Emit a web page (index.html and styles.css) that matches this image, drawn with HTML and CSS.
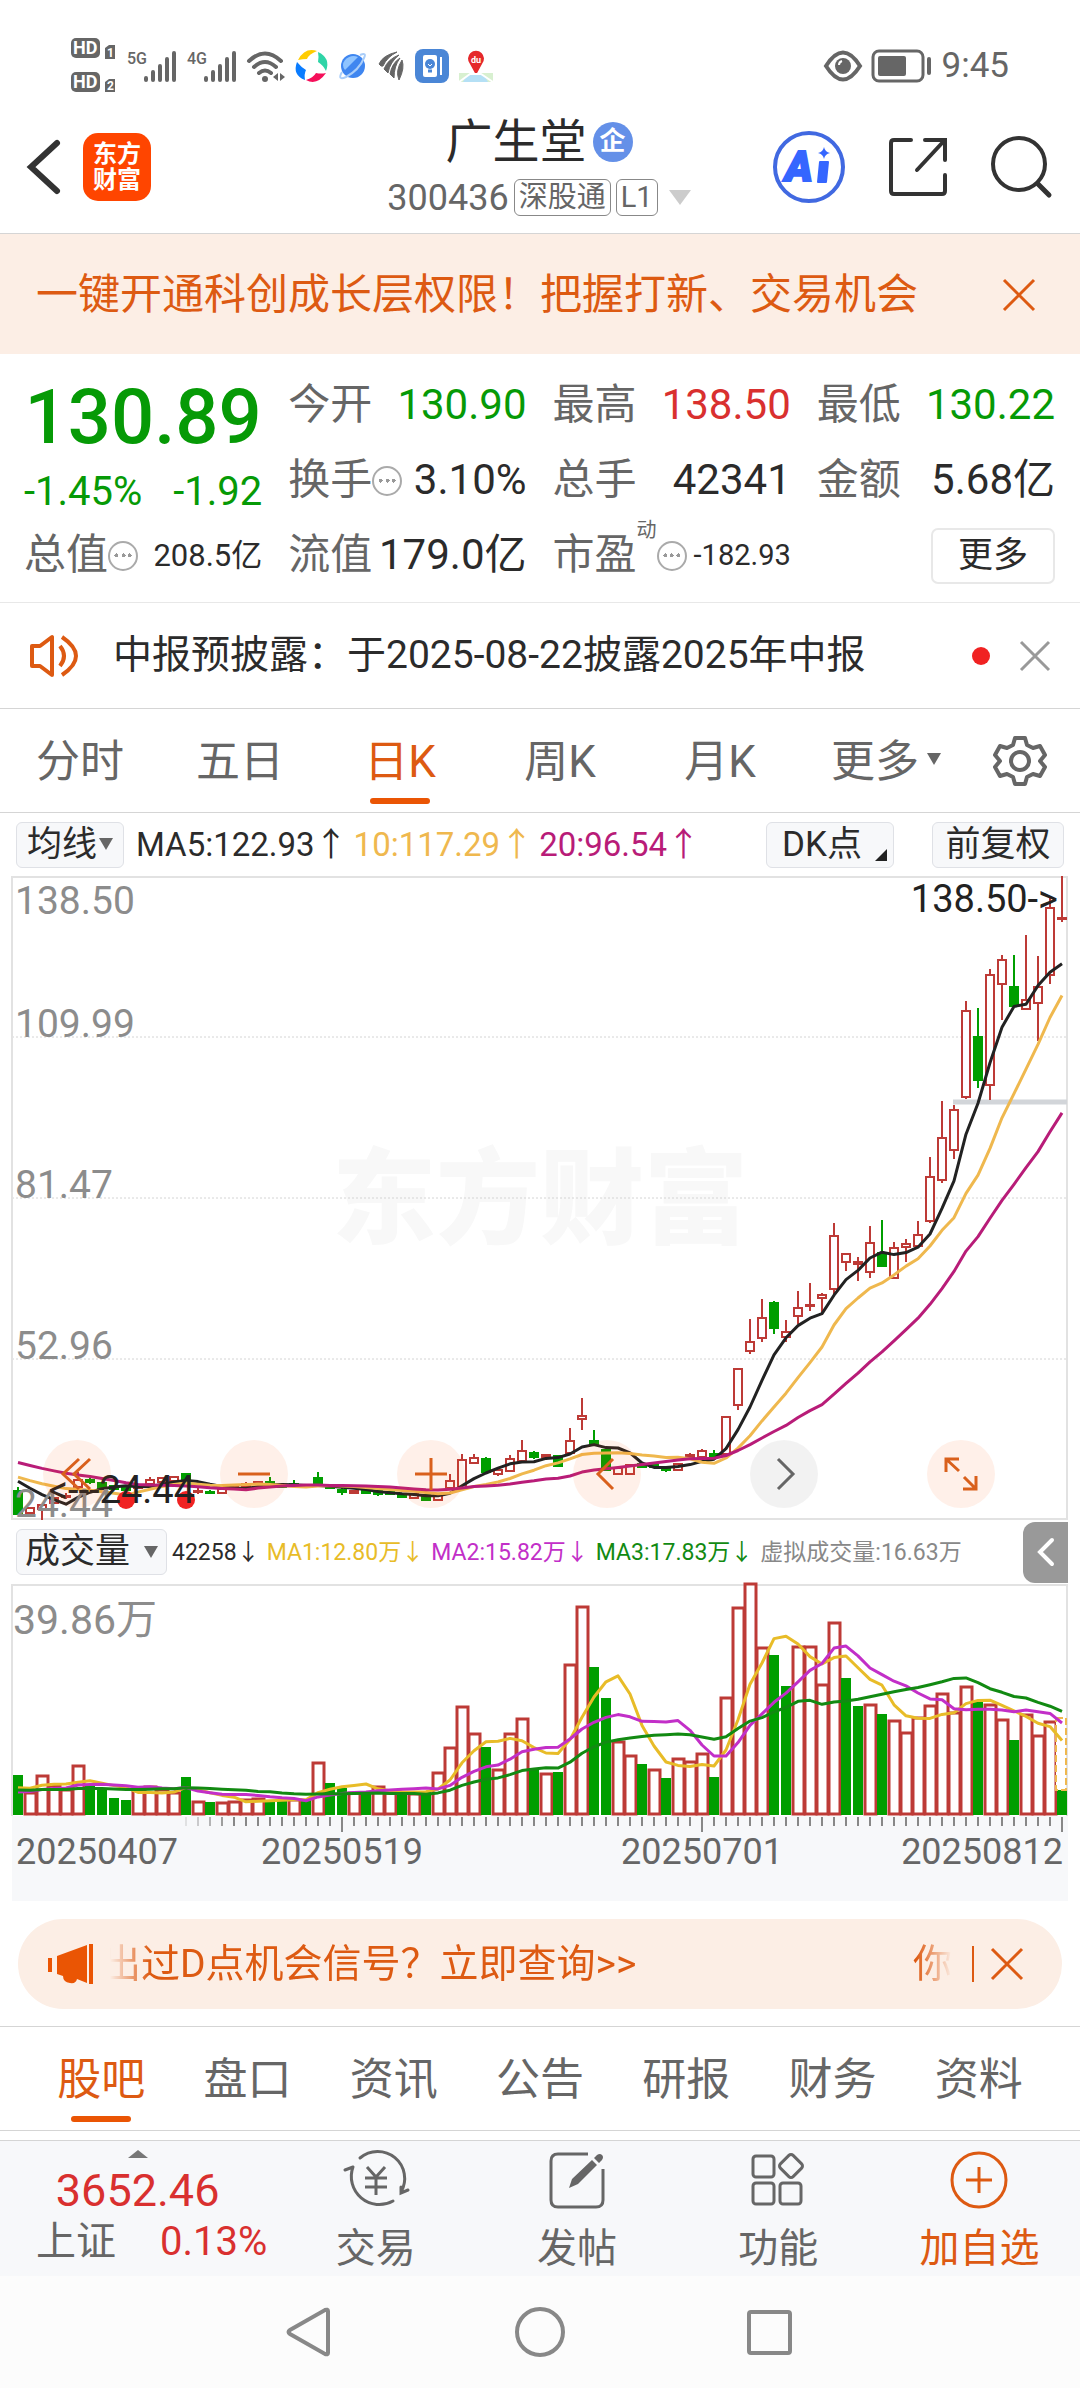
FILE: index.html
```html
<!DOCTYPE html>
<html lang="zh-CN">
<head>
    <meta charset="UTF-8">
    <meta name="viewport" content="width=device-width, initial-scale=1.0">
    <title>广生堂 300436</title>
    <link rel="stylesheet" href="styles.css">
</head>
<body>
    <!-- status bar -->
    <div class="status-bar">
        <div class="status-left">
            <svg width="46" height="56" viewBox="0 0 46 56">
                <rect x="0" y="0" width="29" height="20" rx="5" fill="#666"/>
                <rect x="0" y="34" width="29" height="20" rx="5" fill="#666"/>
                <path d="M34 10l4-3h6v14H34zM34 44l4-3h6v13H34z" fill="#666"/>
                <text class="hd" x="2" y="16">HD</text>
                <text class="hd" x="2" y="50">HD</text>
                <text class="sim" x="36" y="19">1</text>
                <text class="sim" x="36" y="52">2</text>
            </svg>
            <svg width="50" height="34" viewBox="0 0 50 34">
                <text class="net" x="0" y="15">5G</text>
                <path d="M19 31v-2M26 31v-8M33 31V17M40 31V10M47 31V4" stroke="#666" stroke-width="4" stroke-linecap="round"/>
            </svg>
            <svg width="50" height="34" viewBox="0 0 50 34">
                <text class="net" x="0" y="15">4G</text>
                <path d="M19 31v-2M26 31v-8M33 31V17M40 31V10M47 31V4" stroke="#666" stroke-width="4" stroke-linecap="round"/>
            </svg>
            <svg width="38" height="34" viewBox="0 0 38 34">
                <path d="M2 12Q18-3 34 12M7 18Q18 8 29 18M12 24Q18 19 24 24" fill="none" stroke="#666" stroke-width="4" stroke-linecap="round"/>
                <circle cx="18" cy="30" r="3" fill="#666"/>
                <path d="M31 24v8l-5-4zM33 32v-8l5 4z" fill="#666"/>
            </svg>
            <svg width="34" height="34" viewBox="0 0 34 34">
                <path d="M3 11Q10-2 22 2Q14 5 12 10Q8 10 3 11z" fill="#fc0"/>
                <path d="M23 3Q36 9 31 22Q28 16 23 13Q24 8 23 3z" fill="#2fd4a7"/>
                <path d="M31 24Q22 37 11 31Q18 29 21 24Q26 25 31 24z" fill="#f5105a"/>
                <path d="M2 13Q-3 26 10 31Q9 25 11 21Q6 18 2 13z" fill="#0a7cff"/>
            </svg>
            <svg width="28" height="28" viewBox="0 0 28 28">
                <circle cx="14" cy="14" r="12" fill="#3f86f0"/>
                <path d="M6 8q6-6 13-3l-13 13q-4-5 0-10z" fill="#8fc4ff"/>
                <path d="M3 20q-5 9 4 5Q20 18 25 6q3-6-4-3" fill="none" stroke="#a9cdf9" stroke-width="2"/>
            </svg>
            <svg width="28" height="30" viewBox="-2 0 28 30">
                <path d="M18 1Q4 4 0 13Q2 16 4 15Q8 6 18 1zM20 4Q9 8 5 18l4 4Q11 11 20 4zM21 7Q13 12 11 23l4 4Q15 15 21 7zM23 9Q26 17 20 29Q16 20 23 9z" fill="#666" stroke="#666"/>
            </svg>
            <svg width="34" height="34" viewBox="0 0 34 34">
                <rect width="34" height="34" rx="8" fill="#4a86d6"/>
                <rect x="8" y="6" width="14" height="22" rx="2" fill="#fff"/>
                <path d="M26 8v18" stroke="#fff" stroke-width="2"/>
                <circle cx="15" cy="15" r="5" fill="#4a86d6"/>
                <path d="M13 22h4" stroke="#4a86d6" stroke-width="3"/>
                <path d="M13 15l2 2 2-2" fill="none" stroke="#fff"/>
            </svg>
            <svg width="34" height="34" viewBox="0 0 34 34">
                <path d="M0 24h34v9H0z" fill="#d8f0d0"/>
                <path d="M8 26h17l4 7H4z" fill="#b5e0f5"/>
                <path d="M17 26L11 15A8 8 0 1 1 23 15z" fill="#e5282b"/>
                <path d="M0 33L11 25h11l12 8" fill="none" stroke="#fff" stroke-width="2"/>
                <text class="pin" x="17" y="14">du</text>
            </svg>
        </div>
        <div class="status-right">
            <svg width="38" height="30" viewBox="0 0 38 30">
                <path d="M2 15Q19-12 36 15Q19 42 2 15z" fill="none" stroke="#666" stroke-width="4"/>
                <circle cx="19" cy="15" r="8" fill="#666"/>
                <path d="M15 14q0-3 3-4" fill="none" stroke="#fff" stroke-width="2"/>
            </svg>
            <svg width="60" height="32" viewBox="0 0 60 32">
                <rect x="1" y="1" width="50" height="30" rx="6" fill="none" stroke="#666" stroke-width="3"/>
                <rect x="6" y="6" width="28" height="20" rx="2" fill="#666"/>
                <path d="M57 9v14" stroke="#666" stroke-width="4" stroke-linecap="round"/>
            </svg>
            <span class="clock">9:45</span>
        </div>
    </div>

    <header class="header">
        <div class="header-side">
            <button class="icon-btn" aria-label="返回">
                <svg width="36" height="56" viewBox="0 0 36 56"><path d="M31 4L5 28l26 24" fill="none" stroke="#333" stroke-width="6" stroke-linecap="round"/></svg>
            </button>
            <a class="logo" href="#">东方<br>财富</a>
        </div>
        <div class="stock">
            <h1>广生堂<span class="corp">企</span></h1>
            <div class="stock-code">
                <span>300436</span>
                <span class="tag">深股通</span>
                <span class="tag">L1</span>
                <svg width="22" height="15" viewBox="0 0 22 15"><path d="M0 0h22L11 15z" fill="#ccc"/></svg>
            </div>
        </div>
        <div class="header-side header-right">
            <button class="icon-btn" aria-label="AI">
                <svg width="74" height="74" viewBox="0 0 74 74">
                    <circle cx="37" cy="37" r="34" fill="none" stroke="#4169e1" stroke-width="4"/>
                    <text class="ai" x="13" y="51">A</text>
                    <path d="M48 32h8l-2 20h-8z" fill="#3566ff" stroke="#3566ff" stroke-width="2" stroke-linejoin="round"/>
                    <path d="M52 17q1 5 6 6q-5 1-6 6q-1-5-6-6q5-1 6-6z" fill="#3566ff"/>
                </svg>
            </button>
            <button class="icon-btn" aria-label="分享">
                <svg width="60" height="60" viewBox="0 0 60 60"><path d="M23 3H6q-3 0-3 3v48q0 3 3 3h48q3 0 3-3V38M37 3h20v20M55 5L29 33" fill="none" stroke="#333" stroke-width="4" stroke-linecap="round"/></svg>
            </button>
            <button class="icon-btn" aria-label="搜索">
                <svg width="62" height="62" viewBox="0 0 62 62"><circle cx="29" cy="28" r="26" fill="none" stroke="#333" stroke-width="4"/><path d="M48 48l11 11" stroke="#333" stroke-width="5" stroke-linecap="round"/></svg>
            </button>
        </div>
    </header>

    <div class="banner">
        <a href="#">一键开通科创成长层权限！把握打新、交易机会</a>
        <button class="icon-btn" aria-label="关闭">
            <svg width="34" height="34" viewBox="0 0 34 34"><path d="M2 2l30 30M32 2L2 32" stroke="#dd5a12" stroke-width="3"/></svg>
        </button>
    </div>

    <!-- quote -->
    <section class="quote">
        <div class="price down">
            <strong>130.89</strong>
            <div class="change"><span>-1.45%</span><span>-1.92</span></div>
        </div>
        <div class="item"><span>今开</span><b class="down">130.90</b></div>
        <div class="item"><span>最高</span><b class="up">138.50</b></div>
        <div class="item"><span>最低</span><b class="down">130.22</b></div>
        <div class="item"><span>换手</span><i class="info"></i><b>3.10%</b></div>
        <div class="item"><span>总手</span><b>42341</b></div>
        <div class="item"><span>金额</span><b>5.68亿</b></div>
        <div class="item"><span>总值</span><i class="info"></i><b class="small">208.5亿</b></div>
        <div class="item"><span>流值</span><b>179.0亿</b></div>
        <div class="item"><span>市盈</span><sup>动</sup><i class="info"></i><b class="smaller">-182.93</b></div>
        <button class="more">更多</button>
    </section>

    <div class="notice">
        <svg width="50" height="44" viewBox="0 0 50 44"><path d="M2 12h8L22 3v38L10 32H2zM30 12q8 10 0 20M32 3q28 19 0 38" fill="none" stroke="#dd5a12" stroke-width="4" stroke-linejoin="round"/></svg>
        <a href="#">中报预披露：于2025-08-22披露2025年中报</a>
        <span class="dot"></span>
        <button class="icon-btn" aria-label="关闭">
            <svg width="30" height="30" viewBox="0 0 30 30"><path d="M1 1l28 28M29 1L1 29" stroke="#999" stroke-width="3"/></svg>
        </button>
    </div>

    <nav class="period-tabs">
        <button>分时</button>
        <button>五日</button>
        <button class="active">日K</button>
        <button>周K</button>
        <button>月K</button>
        <button class="drop">更多<span class="caret"></span></button>
        <button class="gear" aria-label="设置">
            <svg width="52" height="52" viewBox="0 0 52 52">
                <path d="M21 3h10l2 7 6 3 7-2 5 9-5 6 5 6-5 9-7-2-6 3-2 7H21l-2-7-6-3-7 2-5-9 5-6-5-6 5-9 7 2 6-3z" fill="none" stroke="#666" stroke-width="4" stroke-linejoin="round"/>
                <circle cx="26" cy="26" r="9" fill="none" stroke="#666" stroke-width="4"/>
            </svg>
        </button>
    </nav>

    <div class="toolbar">
        <button class="chip line-type">均线<span class="caret"></span></button>
        <div class="ma-values">
            <span>MA5:122.93↑</span>
            <span class="ma10">10:117.29↑</span>
            <span class="ma20">20:96.54↑</span>
        </div>
        <button class="chip dk">DK点<span class="corner"></span></button>
        <button class="chip restore">前复权</button>
    </div>

    <!-- daily K chart -->
    <div class="chart">
        <svg id="kChart" viewBox="0 0 1056 644"></svg>
        <div class="chart-actions">
            <button aria-label="最左"><svg width="32" height="32" viewBox="0 0 32 32"><path d="M18 1L2 16l16 15M29 1L13 16l16 15"/></svg></button>
            <button aria-label="缩小"><svg width="32" height="32" viewBox="0 0 32 32"><path d="M0 16h32"/></svg></button>
            <button aria-label="放大"><svg width="32" height="32" viewBox="0 0 32 32"><path d="M0 16h32M16 0v32"/></svg></button>
            <button aria-label="左移"><svg width="32" height="32" viewBox="0 0 32 32"><path d="M22 1L7 16l15 15"/></svg></button>
            <button class="off" aria-label="右移"><svg width="32" height="32" viewBox="0 0 32 32"><path d="M10 1l15 15-15 15"/></svg></button>
            <button aria-label="全屏"><svg width="34" height="34" viewBox="0 0 34 34"><path d="M15 2H2v13M2 2l13 12M32 19v13H19M32 32L20 20"/></svg></button>
        </div>
    </div>

    <div class="vol-bar">
        <button class="chip">成交量<span class="caret"></span></button>
        <div class="vol-values">
            <span>42258↓</span>
            <span class="v1">MA1:12.80万↓</span>
            <span class="v2">MA2:15.82万↓</span>
            <span class="v3">MA3:17.83万↓</span>
            <span class="v4">虚拟成交量:16.63万</span>
        </div>
        <button class="fold" aria-label="展开">
            <svg width="18" height="30" viewBox="0 0 18 30"><path d="M15 3L3 15l12 12" fill="none" stroke="#fff" stroke-width="4" stroke-linecap="round"/></svg>
        </button>
    </div>

    <div class="chart">
        <svg id="volChart" viewBox="0 0 1056 317"></svg>
    </div>

    <div class="promo">
        <svg width="46" height="40" viewBox="0 0 46 40"><path d="M1 14h4v14H1zM10 12L40 1v38l-10-4q-1 5-7 4q-7-1-7-7l-6-2zM42 0h4v40h-4z" fill="#ea5504"/></svg>
        <a href="#" class="promo-text"><span>出过D点机会信号？立即查询&gt;&gt;</span><span>你</span></a>
        <span class="line"></span>
        <button class="icon-btn" aria-label="关闭">
            <svg width="34" height="34" viewBox="0 0 34 34"><path d="M2 2l30 30M32 2L2 32" stroke="#dd5a12" stroke-width="3"/></svg>
        </button>
    </div>

    <nav class="info-tabs">
        <button class="active">股吧</button>
        <button>盘口</button>
        <button>资讯</button>
        <button>公告</button>
        <button>研报</button>
        <button>财务</button>
        <button>资料</button>
    </nav>

    <footer class="bottom-bar">
        <a href="#" class="index">
            <svg width="20" height="8" viewBox="0 0 20 8"><path d="M0 8L10 0l10 8z" fill="#777"/></svg>
            <span class="index-value">3652.46</span>
            <span class="index-row"><span>上证</span><span class="up">0.13%</span></span>
        </a>
        <button>
            <svg width="66" height="60" viewBox="0 0 66 60" fill="none" stroke="#666" stroke-width="3">
                <path d="M17 8A27 27 0 0 1 58 42M2 20l8-3M10 17A28 28 0 0 0 50 51M65 40l-7 3v-6" stroke-linecap="round"/>
                <path d="M24 17l9 10 9-10M22 28h22M22 37h22M33 27v18"/>
            </svg>
            交易
        </button>
        <button>
            <svg width="66" height="60" viewBox="0 0 66 60" fill="none" stroke="#666" stroke-width="3">
                <path d="M44 4H14q-7 0-7 7v39q0 7 7 7h38q7 0 7-7V19"/>
                <path d="M25 38l3-9L48 10l5 5-19 19zM50 8l3-3q3-2 5 0t0 5l-3 3z" fill="#666" stroke="none"/>
            </svg>
            发帖
        </button>
        <button>
            <svg width="66" height="60" viewBox="0 0 66 60" fill="none" stroke="#666" stroke-width="3">
                <rect x="8" y="6" width="21" height="21" rx="3"/>
                <rect x="8" y="33" width="21" height="21" rx="3"/>
                <rect x="35" y="33" width="21" height="21" rx="3"/>
                <rect x="37" y="7" width="18" height="18" rx="3" transform="rotate(45 46 16)"/>
            </svg>
            功能
        </button>
        <button class="add">
            <svg width="66" height="60" viewBox="0 0 66 60" fill="none" stroke="#dd5a12" stroke-width="3"><circle cx="33" cy="30" r="27"/><path d="M33 17v26M20 30h26"/></svg>
            加自选
        </button>
    </footer>

    <div class="system-nav">
        <button class="icon-btn" aria-label="后退"><svg width="52" height="52" viewBox="0 0 52 52"><path d="M44 5v42q0 2-3 1L6 28q-3-2 0-4L41 4q3-1 3 1z" fill="none" stroke="#888" stroke-width="4"/></svg></button>
        <button class="icon-btn" aria-label="主页"><svg width="52" height="52" viewBox="0 0 52 52"><circle cx="26" cy="26" r="23" fill="none" stroke="#888" stroke-width="4"/></svg></button>
        <button class="icon-btn" aria-label="任务"><svg width="52" height="52" viewBox="0 0 52 52"><rect x="5" y="6" width="41" height="41" rx="2" fill="none" stroke="#888" stroke-width="4"/></svg></button>
    </div>

    <script src="script.js"></script>
</body>
</html>
```

FILE: styles.css
```css
* {
    box-sizing: border-box;
}

body {
    margin: 0;
    background: #fff;
    color: #2b2b2b;
    font-family: Roboto, "Noto Sans CJK SC", sans-serif;
    line-height: 1.2;
}

button {
    padding: 0;
    border: none;
    background: none;
    color: inherit;
    font-family: inherit;
    line-height: inherit;
    cursor: pointer;
}

a {
    color: inherit;
    text-decoration: none;
}

svg {
    display: block;
    flex-shrink: 0;
    overflow: visible;
}

.up {
    color: #d9302f;
}

.down {
    color: #069a06;
}

.caret {
    display: inline-block;
    border: 7px solid transparent;
    border-top: 12px solid #666;
    border-bottom: none;
}

/* status bar */
.status-bar {
    display: flex;
    justify-content: space-between;
    height: 100px;
    padding: 32px 71px 0;
}

.status-left,
.status-right {
    display: flex;
    align-items: center;
    gap: 10px;
}

.hd {
    font-size: 18px;
    font-weight: 700;
    fill: #fff;
}

.sim {
    font-size: 12px;
    font-weight: 700;
    fill: #fff;
}

.net {
    font-size: 16px;
    font-weight: 500;
    fill: #666;
}

.pin {
    font-size: 9px;
    font-weight: 700;
    fill: #fff;
    text-anchor: middle;
}

.clock {
    color: #666;
    font-size: 35px;
}

/* header */
.header {
    display: flex;
    align-items: center;
    justify-content: space-between;
    height: 134px;
    padding: 0 28px 0 26px;
    border-bottom: 1px solid #d5d5d5;
}

.header-side {
    display: flex;
    flex: 1;
    align-items: center;
    gap: 21px;
}

.header-right {
    justify-content: flex-end;
    gap: 42px;
}

.logo {
    padding: 8px 0;
    width: 68px;
    border-radius: 15px;
    background: #ff4500;
    color: #fff;
    font-size: 24px;
    font-weight: 700;
    line-height: 26px;
    text-align: center;
}

.stock {
    padding-top: 4px;
}

.stock h1 {
    display: flex;
    align-items: center;
    justify-content: center;
    gap: 6px;
    margin: 0;
    font-size: 47px;
    font-weight: 400;
    line-height: 58px;
}

.corp {
    width: 40px;
    height: 40px;
    border-radius: 50%;
    background: #6490e8;
    color: #fff;
    font-size: 26px;
    font-weight: 700;
    line-height: 38px;
    text-align: center;
}

.stock-code {
    display: flex;
    align-items: center;
    gap: 5px;
    color: #666;
    font-size: 36px;
    line-height: 54px;
}

.stock-code svg {
    margin-left: 6px;
}

.tag {
    padding: 0 4px;
    border: 1px solid #888;
    border-radius: 6px;
    font-size: 29px;
    line-height: 35px;
}

.ai {
    font-size: 42px;
    font-weight: 900;
    font-style: italic;
    fill: #3566ff;
    stroke: #3566ff;
    stroke-width: 2;
}

.banner {
    display: flex;
    align-items: center;
    justify-content: space-between;
    height: 120px;
    padding: 2px 44px 0 36px;
    background: #fceee5;
    color: #dd5a12;
    font-size: 42px;
}

/* quote */
.quote {
    display: grid;
    grid-template-columns: repeat(4, minmax(0, 1fr));
    grid-auto-rows: 75px;
    column-gap: 26px;
    padding: 14px 25px 9px 24px;
    border-bottom: 1px solid #e8e8e8;
}

.price {
    grid-row: span 2;
}

.price strong {
    display: block;
    font-size: 76px;
    font-weight: 500;
    line-height: 98px;
    text-align: center;
}

.change {
    display: flex;
    justify-content: space-between;
    font-size: 40px;
    line-height: 52px;
}

.item {
    display: flex;
    align-items: center;
    font-size: 42px;
    white-space: nowrap;
}

.item span {
    color: #666;
}

.item b {
    margin-left: auto;
    font-weight: 400;
}

.item .small {
    font-size: 31px;
}

.item .smaller {
    font-size: 29px;
}

.item sup {
    align-self: flex-start;
    color: #666;
    font-size: 20px;
}

.info {
    width: 30px;
    height: 30px;
    border: 2px solid #aaa;
    border-radius: 50%;
    background: radial-gradient(circle, #999 2px, transparent 2px) center / 7px 7px no-repeat, radial-gradient(circle, #999 2px, transparent 2px) 3px center / 7px 7px no-repeat, radial-gradient(circle, #999 2px, transparent 2px) 16px center / 7px 7px no-repeat;
}

.more {
    align-self: center;
    justify-self: end;
    width: 124px;
    height: 56px;
    border: 2px solid #e8e8e8;
    border-radius: 7px;
    font-size: 35px;
}

.notice {
    display: flex;
    align-items: center;
    height: 106px;
    padding: 0 30px;
    border-bottom: 1px solid #d5d5d5;
    font-size: 39px;
}

.notice a {
    flex: 1;
    margin-left: 33px;
}

.dot {
    width: 18px;
    height: 18px;
    margin-right: 30px;
    border-radius: 50%;
    background: #f02222;
}

/* tabs */
.period-tabs {
    display: grid;
    grid-template-columns: repeat(6, 160fr) 120fr;
    height: 104px;
    border-bottom: 1px solid #d5d5d5;
}

.period-tabs button,
.info-tabs button {
    position: relative;
    flex: 1;
    padding-top: 4px;
    color: #666;
    font-size: 44px;
}

.period-tabs .drop {
    padding-left: 12px;
}

.period-tabs .caret {
    margin-left: 8px;
    vertical-align: 12px;
}

.period-tabs .gear {
    display: flex;
    align-items: center;
    justify-content: center;
    padding-top: 0;
}

.period-tabs .active,
.info-tabs .active {
    color: #dd5a12;
}

.period-tabs .active::after,
.info-tabs .active::after {
    content: "";
    position: absolute;
    bottom: 8px;
    left: calc(50% - 30px);
    width: 60px;
    height: 6px;
    border-radius: 3px;
    background: #ea5504;
}

/* indicator toolbar */
.toolbar {
    display: flex;
    align-items: center;
    height: 63px;
    padding: 0 16px;
}

.chip {
    position: relative;
    height: 46px;
    padding: 0 6px;
    border: 1px solid #dfe1e6;
    border-radius: 6px;
    background: #f7f8fa;
    font-size: 35px;
    line-height: 44px;
    white-space: nowrap;
}

.line-type {
    width: 108px;
}

.toolbar .caret {
    margin-left: 2px;
    vertical-align: 6px;
}

.ma-values {
    display: flex;
    flex: 1;
    gap: 6px;
    margin-left: 12px;
    font-size: 33px;
}

.ma10 {
    color: #efb84e;
}

.ma20 {
    color: #b81c78;
}

.dk {
    width: 128px;
    padding-right: 22px;
}

.restore {
    width: 132px;
    margin-left: 38px;
}

.corner {
    position: absolute;
    right: 6px;
    bottom: 6px;
    border: 6px solid #222;
    border-top-color: transparent;
    border-left-color: transparent;
}

/* charts */
.chart {
    position: relative;
    margin: 0 12px;
}

.chart > svg {
    width: 100%;
    height: auto;
}

.frame {
    fill: none;
    stroke: #e2e2e2;
    stroke-width: 2;
}

.grid {
    stroke: #d4d4d4;
    stroke-dasharray: 2 2;
}

.watermark {
    fill: #f8f8f8;
    font-size: 104px;
    font-weight: 900;
    text-anchor: middle;
}

.scale {
    fill: #8c8c8c;
    font-size: 39px;
}

.scale-vol {
    fill: #8c8c8c;
    font-size: 41px;
}

.mark {
    fill: #222;
    font-size: 38px;
}

.date {
    fill: #666;
    font-size: 36px;
}

.rise {
    fill: #fff;
    stroke: #bd3a36;
    stroke-width: 2;
}

.vol-rise {
    fill: #fff;
    stroke: #bd3a36;
    stroke-width: 3;
}

.fall {
    fill: #009e00;
    stroke: #009e00;
    stroke-width: 2;
}

.vol-fall {
    fill: #009e00;
}

.ma {
    fill: none;
    stroke-width: 3;
    stroke-linejoin: round;
}

.tick {
    stroke: #888;
    stroke-width: 2;
}

.chart-actions {
    position: absolute;
    right: 0;
    bottom: 12px;
    left: 0;
    display: flex;
    justify-content: space-between;
    padding: 0 73px 0 31px;
}

.chart-actions button {
    display: flex;
    align-items: center;
    justify-content: center;
    width: 68px;
    height: 68px;
    border-radius: 50%;
    background: rgba(255, 90, 10, 0.09);
}

.chart-actions .off {
    background: rgba(0, 0, 0, 0.05);
}

.chart-actions path {
    fill: none;
    stroke: #d9601c;
    stroke-width: 3;
}

.chart-actions .off path {
    stroke: #666;
}

.vol-bar {
    display: flex;
    align-items: center;
    height: 64px;
    padding: 0 12px 0 16px;
}

.vol-bar .chip {
    width: 151px;
    padding: 0 4px;
}

.vol-bar .caret {
    margin-left: 14px;
    vertical-align: 5px;
}

.vol-values {
    display: flex;
    flex: 1;
    gap: 7px;
    margin-left: 5px;
    padding-top: 2px;
    font-size: 23px;
    white-space: nowrap;
}

.v1 {
    color: #e8bc28;
}

.v2 {
    color: #c22fc8;
}

.v3 {
    color: #128a12;
}

.v4 {
    color: #888;
}

.fold {
    display: flex;
    align-items: center;
    justify-content: center;
    width: 45px;
    height: 61px;
    border-radius: 12px 0 0 12px;
    background: #999;
}

/* promo strip */
.promo {
    display: flex;
    align-items: center;
    height: 90px;
    margin: 18px 18px 17px;
    padding: 0 38px 0 29px;
    border-radius: 45px;
    background: #fceee5;
    color: #dd5a12;
    font-size: 39px;
}

.promo-text {
    display: flex;
    flex: 1;
    justify-content: space-between;
    margin-left: 9px;
    -webkit-mask-image: linear-gradient(to right, transparent 8px, #000 48px, #000 calc(100% - 36px), transparent);
    mask-image: linear-gradient(to right, transparent 8px, #000 48px, #000 calc(100% - 36px), transparent);
}

.line {
    width: 2px;
    height: 36px;
    margin: 0 16px 0 20px;
    background: #dd5a12;
}

.info-tabs {
    display: flex;
    height: 105px;
    padding: 0 28px;
    border-top: 1px solid #d5d5d5;
    border-bottom: 1px solid #d5d5d5;
}

/* bottom bar */
.bottom-bar {
    display: grid;
    grid-template-columns: 275fr repeat(4, 201fr);
    height: 136px;
    margin-top: 9px;
    border-top: 1px solid #d5d5d5;
    background: #f7f8fa;
    color: #666;
    font-size: 40px;
}

.bottom-bar button {
    display: flex;
    flex-direction: column;
    align-items: center;
    padding-top: 9px;
    font-size: 40px;
    line-height: 78px;
}

.bottom-bar .add {
    color: #dd5a12;
}

.index {
    display: flex;
    flex-direction: column;
    align-items: center;
    padding-top: 9px;
}

.index-value {
    color: #d9302f;
    font-size: 45px;
    line-height: 66px;
}

.index-row {
    display: flex;
    gap: 44px;
    padding-left: 28px;
    line-height: 36px;
}

.system-nav {
    display: flex;
    align-items: center;
    justify-content: center;
    gap: 178px;
    height: 112px;
    background: #fcfcfc;
}
```

FILE: script.js
```js
const STEP = 12;
const FIRST = 6;

// one entry per day: [direction, body top, body bottom, high, low, volume]
const days = [
    ["d", 615, 638, 611, 638, 39], ["u", 632, 637, 632, 637, 21], ["u", 629, 633, 629, 644, 38], ["u", 622, 627, 622, 627, 28],
    ["u", 620, 621, 617, 623, 24], ["u", 604, 611, 596, 611, 48], ["d", 604, 606, 602, 608, 28], ["d", 607, 612, 607, 612, 26],
    ["d", 610, 613, 610, 613, 16], ["d", 612, 614, 612, 614, 14], ["u", 609, 612, 609, 612, 24], ["u", 604, 608, 601, 608, 27],
    ["u", 602, 606, 602, 606, 24], ["u", 601, 605, 601, 605, 21], ["d", 598, 606, 598, 606, 37], ["u", 615, 616, 612, 618, 12],
    ["d", 616, 617, 614, 618, 12], ["u", 613, 617, 613, 617, 11], ["u", 609, 611, 609, 611, 12], ["u", 608, 610, 606, 610, 14],
    ["u", 606, 608, 606, 608, 15], ["d", 606, 609, 601, 609, 14], ["d", 609, 611, 609, 611, 14], ["d", 608, 610, 604, 610, 14],
    ["d", 609, 611, 609, 611, 14], ["d", 602, 607, 596, 609, 51], ["d", 610, 612, 610, 612, 31], ["d", 614, 616, 612, 619, 26],
    ["u", 615, 617, 615, 617, 21], ["d", 615, 617, 615, 617, 21], ["d", 615, 618, 609, 620, 27], ["d", 616, 618, 616, 618, 21],
    ["d", 618, 621, 618, 621, 21], ["u", 618, 622, 618, 622, 20], ["d", 619, 624, 619, 625, 22], ["u", 618, 624, 618, 624, 41],
    ["u", 605, 612, 598, 612, 66], ["u", 584, 612, 578, 612, 107], ["u", 582, 587, 578, 588, 80], ["d", 583, 596, 581, 596, 67],
    ["u", 594, 598, 592, 600, 44], ["u", 583, 595, 579, 595, 80], ["u", 575, 585, 564, 585, 95], ["d", 577, 581, 575, 583, 46],
    ["u", 579, 581, 579, 581, 40], ["d", 580, 590, 579, 590, 42], ["u", 565, 577, 552, 577, 149], ["u", 540, 543, 522, 554, 207],
    ["d", 565, 569, 554, 570, 147], ["d", 574, 594, 574, 594, 116], ["u", 592, 598, 592, 598, 72], ["u", 589, 598, 588, 598, 58],
    ["d", 588, 591, 588, 591, 50], ["d", 589, 591, 589, 591, 44], ["d", 591, 594, 590, 596, 36], ["u", 588, 594, 588, 594, 55],
    ["u", 579, 581, 577, 583, 52], ["u", 575, 581, 573, 581, 60], ["d", 578, 580, 574, 583, 37], ["u", 541, 578, 541, 578, 116],
    ["u", 493, 529, 493, 534, 206], ["u", 466, 475, 443, 478, 230], ["u", 442, 462, 423, 466, 166], ["d", 427, 452, 425, 458, 159],
    ["u", 456, 461, 444, 466, 128], ["u", 432, 440, 415, 448, 167], ["u", 429, 430, 407, 435, 167], ["u", 419, 422, 417, 439, 129],
    ["u", 360, 413, 347, 418, 191], ["u", 378, 386, 378, 395, 136], ["u", 386, 388, 381, 405, 108], ["u", 367, 396, 350, 402, 109],
    ["d", 377, 390, 344, 390, 100], ["u", 372, 402, 366, 402, 93], ["u", 368, 371, 363, 386, 81], ["u", 359, 370, 345, 370, 96],
    ["u", 301, 345, 281, 347, 108], ["u", 262, 304, 225, 307, 120], ["u", 234, 274, 229, 283, 101], ["u", 135, 221, 125, 223, 127],
    ["d", 161, 204, 132, 212, 112], ["u", 99, 209, 93, 224, 109], ["u", 84, 108, 79, 144, 94], ["d", 111, 130, 79, 130, 74],
    ["u", 124, 133, 59, 133, 99], ["u", 111, 127, 80, 165, 78], ["u", 32, 99, 22, 108, 92], ["u", 42, 43, 0, 46, 24]
];

// days whose volume bar has the other colour than the candle
const volumeFlip = [23, 25, 30, 31, 53, 64, 69, 70, 87];

// values before the first visible day, for the averages
const closesBefore = Array(10).fill(572).concat(Array(9).fill(597));
const volumesBefore = Array(10).fill(26).concat(Array(5).fill(18), Array(4).fill(23));

const x = i => FIRST + STEP * i;

function average(before, values, n) {
    const all = before.concat(values);
    return values.map((_, i) => {
        const end = before.length + i + 1;
        return all.slice(end - n, end).reduce((a, b) => a + b, 0) / n;
    });
}

function line(values, color) {
    const points = values.map((y, i) => `${x(i)},${y.toFixed(1)}`).join(" ");
    return `<polyline class="ma" points="${points}" stroke="${color}"/>`;
}

function drawK() {
    const closes = days.map(d => d[0] === "u" ? d[1] : d[2]);
    let out = `<text class="watermark" x="528" y="360">东方财富</text>`;

    [161, 322, 483].forEach(y => {
        out += `<line class="grid" x1="0" x2="1056" y1="${y}" y2="${y}"/>`;
    });
    out += `<rect class="frame" x="0" y="1" width="1055" height="642"/>`;
    out += `<line x1="941" x2="1055" y1="226" y2="226" stroke="#d2d5d9" stroke-width="5"/>`;

    days.forEach(([dir, top, bottom, high, low], i) => {
        const cls = dir === "u" ? "rise" : "fall";
        out += `<line class="${cls}" x1="${x(i)}" x2="${x(i)}" y1="${high}" y2="${low}"/>`;
        out += `<rect class="${cls}" x="${x(i) - 4}" y="${top}" width="8" height="${bottom - top}"/>`;
    });

    out += line(average(closesBefore, closes, 5), "#222");
    out += line(average(closesBefore, closes, 10), "#efb84e");
    out += line(average(closesBefore, closes, 20), "#b81c78");

    out += `<circle cx="114" cy="624" r="9" fill="#f02222"/><circle cx="174" cy="624" r="9" fill="#f02222"/>`;
    [["138.50", 38], ["109.99", 161], ["81.47", 322], ["52.96", 483], ["24.44", 641]].forEach(([text, y]) => {
        out += `<text class="scale" x="3" y="${y}">${text}</text>`;
    });
    out += `<text class="mark" x="1046" y="36" text-anchor="end">138.50-&gt;</text>`;
    out += `<text class="mark" x="183" y="627" text-anchor="end">&lt;---24.44</text>`;

    document.getElementById("kChart").innerHTML = out;
}

function drawVolume() {
    const base = 230;
    const volumes = days.map(d => d[5]);
    let out = `<rect x="0" y="232" width="1056" height="85" fill="#f7f8fa"/>`;
    out += `<path class="frame" d="M0 232V1h1055v231"/>`;

    days.forEach((d, i) => {
        const up = volumeFlip.includes(i) ? d[0] !== "u" : d[0] === "u";
        out += up
            ? `<rect class="vol-rise" x="${x(i) - 5}" y="${base - d[5]}" width="11" height="${d[5]}"/>`
            : `<rect class="vol-fall" x="${x(i) - 5}" y="${base - d[5]}" width="10" height="${d[5] + 1}"/>`;
    });

    // expected volume of the running day
    out += `<rect x="1044" y="134" width="10" height="72" fill="#fff" stroke="#efb84e" stroke-width="2" stroke-dasharray="7 3"/>`;

    [[5, "#e8bc28"], [10, "#c22fc8"], [20, "#128a12"]].forEach(([n, color]) => {
        out += line(average(volumesBefore, volumes, n).map(v => base - v), color);
    });

    for (let i = 14; i < days.length; i++) {
        const major = [27, 57, 87].includes(i);
        const opacity = i < 18 ? (i - 13) / 5 : 1;
        out += `<line class="tick" x1="${x(i)}" x2="${x(i)}" y1="233" y2="${major ? 248 : 242}" opacity="${opacity}"/>`;
    }

    out += `<text class="scale-vol" x="1" y="50">39.86万</text>`;
    [["20250407", 4, "start"], ["20250519", 330, "middle"], ["20250701", 690, "middle"], ["20250812", 1051, "end"]].forEach(([text, left, anchor]) => {
        out += `<text class="date" x="${left}" y="280" text-anchor="${anchor}">${text}</text>`;
    });

    document.getElementById("volChart").innerHTML = out;
}

drawK();
drawVolume();
```
